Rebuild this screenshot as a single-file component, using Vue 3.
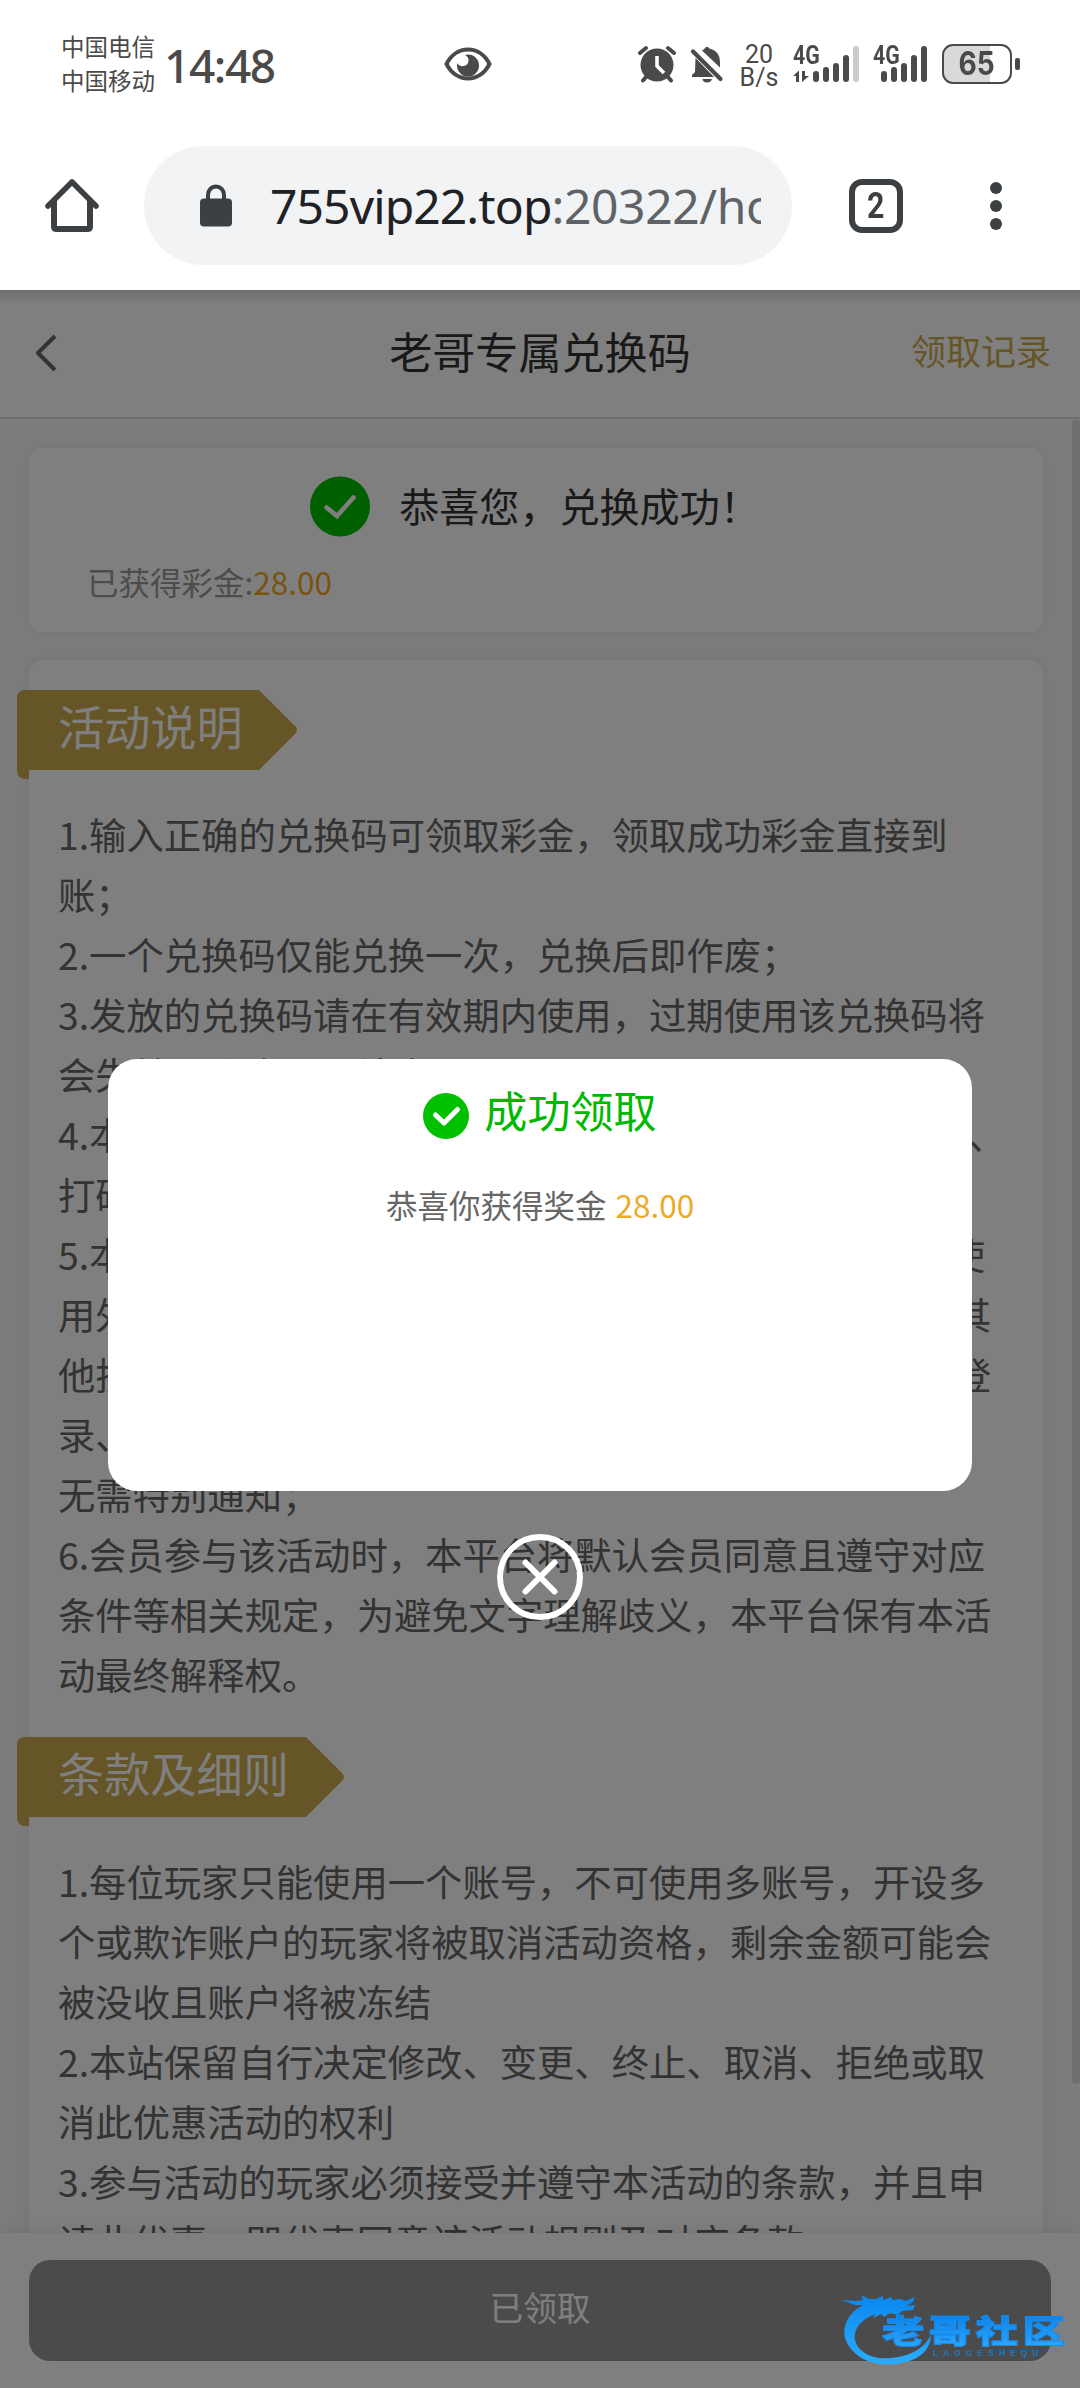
<script setup>
const intro = [
  '1.输入正确的兑换码可领取彩金，领取成功彩金直接到',
  '账；',
  '2.一个兑换码仅能兑换一次，兑换后即作废；',
  '3.发放的兑换码请在有效期内使用，过期使用该兑换码将',
  '会失效，彩金不予补发；',
  '4.本活动赠送的彩金需完成1倍有效流水后即可申请提款、',
  '打码要求不限游戏平台；',
  '5.本活动每位会员仅限参与一次，如发现会员恶意违规使',
  '用外挂程序、多账号、机器人、同一设备重复领取或者其',
  '他技术手段套取彩金，本平台有权冻结账号并且禁止其登',
  '录、取款及参与其他任何优惠活动的权利，平台',
  '无需特别通知；',
  '6.会员参与该活动时，本平台将默认会员同意且遵守对应',
  '条件等相关规定，为避免文字理解歧义，本平台保有本活',
  '动最终解释权。',
]
const terms = [
  '1.每位玩家只能使用一个账号，不可使用多账号，开设多',
  '个或欺诈账户的玩家将被取消活动资格，剩余金额可能会',
  '被没收且账户将被冻结',
  '2.本站保留自行决定修改、变更、终止、取消、拒绝或取',
  '消此优惠活动的权利',
  '3.参与活动的玩家必须接受并遵守本活动的条款，并且申',
  '请此优惠，即代表同意该活动规则及对应条款。',
]
const sections = [
  { title: '活动说明', lines: intro, tip: 242 },
  { title: '条款及细则', lines: terms, tip: 289 },
]
const barTops = [25, 21, 17, 9, 0]
</script>

<template>
  <div class="phone">
    <header class="status">
      <div class="carriers"><span>中国电信</span><span>中国移动</span></div>
      <div class="clock">14:48</div>
      <svg class="eye" width="48" height="34" viewBox="0 0 48 34">
        <path d="M2.5 17C7 8 15 2.5 24 2.5S41 8 45.500 17C41 26 33 31.500 24 31.500S7 26 2.500 17Z" fill="none" stroke="#4a4a4a" stroke-width="4" stroke-linejoin="round" />
        <path d="M24 7.500A11 11 0 1 1 13 18.500L13.300 16A6 6 0 0 0 24.500 14Q25 10 21 8Z" fill="#4a4a4a" />
      </svg>
      <div class="indicators">
        <svg class="alarm" width="38" height="38" viewBox="0 0 38 38">
          <circle cx="19" cy="20" r="16.500" fill="#4a4a4a" />
          <path d="M2 8 8 3M36 8 30 3" stroke="#4a4a4a" stroke-width="4" stroke-linecap="round" />
          <path d="M8 32 5 35.500M30 32 33 35.500" stroke="#4a4a4a" stroke-width="4" stroke-linecap="round" />
          <path d="M19 11V21L26 28" fill="none" stroke="#fff" stroke-width="3.600" />
        </svg>
        <svg class="bell" width="34" height="38" viewBox="0 0 34 38">
          <path d="M12 5.500Q14 4.500 15 3Q17 .5 19.500 3.500Q30 6 30 17V22.500Z" fill="#4a4a4a" />
          <path d="M5.500 13 24 32H2V30L5 27Z" fill="#4a4a4a" />
          <path d="M3 6.500 30.500 34" stroke="#4a4a4a" stroke-width="4.200" stroke-linecap="round" />
          <path d="M12.500 34H22Q21 37.500 17 37.500T12.500 34Z" fill="#4a4a4a" />
        </svg>
        <div class="speed"><span>20</span><span>B/s</span></div>
        <div class="signal first">
          <span class="net">4G</span>
          <svg width="66" height="37" viewBox="0 0 66 37">
            <path d="M0 30 6 24.500V36H3V30ZM9 25V36L16 30H12V25Z" fill="#4a4a4a" />
            <rect v-for="(t, i) in barTops" :key="i" :x="20 + i * 10" :y="t" width="6" :height="36 - t" rx="3" :fill="i === 4 ? '#cbcbcb' : '#4a4a4a'" />
          </svg>
        </div>
        <div class="signal">
          <span class="net">4G</span>
          <svg width="56" height="37" viewBox="0 0 56 37">
            <rect v-for="(t, i) in barTops" :key="i" :x="8 + i * 10" :y="t" width="6" :height="36 - t" rx="3" fill="#4a4a4a" />
          </svg>
        </div>
        <div class="battery"><span>65</span></div>
        <i class="nub"></i>
      </div>
    </header>

    <nav class="toolbar">
      <svg class="home" width="54" height="56" viewBox="0 0 54 56">
        <path d="M3 28 27 4 51 28" fill="none" stroke="#3c4043" stroke-width="5.600" stroke-linecap="round" stroke-linejoin="round" />
        <path d="M9 23V48.500Q9 51 11.500 51H42.500Q45 51 45 48.500V23" fill="none" stroke="#3c4043" stroke-width="6" />
      </svg>
      <div class="omnibox">
        <svg width="32" height="43" viewBox="0 0 32 43">
          <path d="M8 17V11A8 8.500 0 0 1 24 11V17" fill="none" stroke="#3c4043" stroke-width="4" />
          <rect y="14.500" width="32" height="28" rx="4" fill="#3c4043" />
        </svg>
        <div class="url"><b>755vip22.top</b><span>:20322/ho</span></div>
      </div>
      <div class="tabs"><span>2</span></div>
      <div class="dots"><i></i><i></i><i></i></div>
    </nav>

    <main class="page">
      <div class="titlebar">
        <svg width="22" height="38" viewBox="0 0 22 38"><path d="M20 2 3 19 20 36" fill="none" stroke="#666" stroke-width="4" stroke-linejoin="round" /></svg>
        <h1>老哥专属兑换码</h1>
        <a>领取记录</a>
      </div>

      <div class="scroll">
        <section class="card result">
          <div class="headline">
            <svg width="60" height="61" viewBox="0 0 60 61"><circle cx="30" cy="30.500" r="30" fill="#00c000" /><path d="M16.500 31.500 27 40 43.500 21.500" fill="none" stroke="#fff" stroke-width="4.600" stroke-linecap="round" /></svg>
            <span>恭喜您，兑换成功！</span>
          </div>
          <p>已获得彩金:<em>28.00</em></p>
        </section>

        <section class="card rules">
          <template v-for="s in sections" :key="s.title">
            <div class="tag">
              <svg :width="s.tip + 40" height="90" :viewBox="`0 0 ${s.tip + 40} 90`">
                <path :d="`M8 0H${s.tip}L${s.tip + 36} 36Q${s.tip + 40} 40 ${s.tip + 36} 44L${s.tip} 80H12V89H9Q0 89 0 80V8Q0 0 8 0Z`" fill="#ccaa4c" />
              </svg>
              <h2>{{ s.title }}</h2>
            </div>
            <div class="lines"><p v-for="l in s.lines" :key="l">{{ l }}</p></div>
          </template>
        </section>
        <i class="thumb"></i>
      </div>

      <footer class="bottom"><button>已领取</button></footer>

      <div class="overlay">
        <div class="dialog">
          <div class="success">
            <svg width="46" height="46" viewBox="0 0 46 46"><circle cx="23" cy="23" r="23" fill="#00c000" /><path d="M12.500 22 21 30 34.500 16.500" fill="none" stroke="#fff" stroke-width="5" stroke-linecap="round" stroke-linejoin="round" /></svg>
            <span>成功领取</span>
          </div>
          <p>恭喜你获得奖金 <em>28.00</em></p>
        </div>
        <svg class="close" width="88" height="88" viewBox="0 0 88 88">
          <circle cx="44" cy="44" r="40" fill="none" stroke="#fff" stroke-width="6" />
          <path d="M29.500 29.500 58.500 58.500M58.500 29.500 29.500 58.500" stroke="#fff" stroke-width="6" stroke-linecap="round" />
        </svg>
      </div>

      <div class="brand">
        <svg width="100" height="74" viewBox="0 0 100 74">
          <defs><linearGradient id="wave" x1="0" y1="0" x2="0" y2="1"><stop offset="0" stop-color="#0a86ee" /><stop offset="1" stop-color="#2badfd" /></linearGradient></defs>
          <path fill="url(#wave)" d="M0 7 13 8 21 7 19 2 27 6 34 6 41 3 41 7 50 4 50 7 58 6 64 8 73 4 71 9 64 13 73 12 71 17 60 18 56 22 48 20 42 24 39 21 31 25 33 21C18 27 11 37 13 47C16 60 32 67 49 65C70 63 84 54 89 41Q89 59 70 67C49 75 24 73 10 57C-4 42 2 22 21 12L13 12Z" />
        </svg>
        <div class="words"><strong>老哥社区</strong><small>LAOGESHEQU</small></div>
      </div>
    </main>
  </div>
</template>

<style>
body { margin: 0; background: #fff; }
</style>

<style scoped>
* { box-sizing: border-box; }
p, h1, h2 { margin: 0; font-weight: 400; }
em { font-style: normal; color: #f5a623; }
svg { display: block; flex: none; }
.phone { width: 1080px; height: 2388px; overflow: hidden; display: flex; flex-direction: column; background: #fff; font-family: "Noto Sans CJK SC", sans-serif; }

.status { height: 128px; display: flex; align-items: flex-start; color: #4a4a4a; }
.carriers { margin: 29px 0 0 61px; width: 103px; display: flex; flex-direction: column; font-size: 23.500px; line-height: 34px; white-space: nowrap; }
.clock { margin-top: 35px; width: 280px; font: 500 46px/60px "Noto Sans", sans-serif; letter-spacing: -1.400px; }
.eye { margin-top: 47px; }
.indicators { display: flex; margin-left: 146px; }
.alarm { margin-top: 45px; }
.bell { margin: 45px 0 0 14px; }
.speed { width: 40px; margin: 43px 0 0 15px; display: flex; flex-direction: column; align-items: center; font: 400 25px/23px Roboto, sans-serif; }
.signal { position: relative; margin: 46px 0 0 14px; }
.signal.first { margin-left: 14px; }
.net { position: absolute; left: 0; top: -3px; font: 700 26px/24px Roboto, sans-serif; transform: scaleX(.82); transform-origin: left; }
.battery { width: 70px; height: 40px; margin: 44px 0 0 13px; border: 2.500px solid #4a4a4a; border-radius: 11px; background: linear-gradient(90deg, #d9d9d9 70%, #fff 70%); display: flex; align-items: center; justify-content: center; font: 700 32px/36px Inter, sans-serif; }
.battery span { transform: scaleX(.88); }
.nub { width: 5px; height: 12px; margin: 58px 0 0 3px; border-radius: 2px; background: #4a4a4a; }

.toolbar { height: 162px; flex: none; display: flex; align-items: flex-start; }
.home { margin: 50px 0 0 45px; }
.omnibox { margin: 18px 0 0 45px; width: 648px; height: 119px; border-radius: 60px; background: #f1f3f4; display: flex; align-items: center; padding-left: 56px; }
.url { margin-left: 38px; width: 491px; overflow: hidden; white-space: nowrap; font: 400 48px/80px "Noto Sans", sans-serif; color: #5f6368; letter-spacing: -.4px; }
.url b { font-weight: 400; color: #202124; letter-spacing: -.9px; }
.tabs { margin: 51px 0 0 57px; width: 54px; height: 54px; border: 6px solid #3c4043; border-radius: 13px; display: flex; align-items: center; justify-content: center; font: 700 37px/42px Roboto, sans-serif; color: #3c4043; }
.tabs span { transform: scaleX(.82); }
.dots { margin: 54px 0 0 87px; display: flex; flex-direction: column; gap: 6px; }
.dots i { width: 12px; height: 12px; border-radius: 50%; background: #3c4043; }

.page { position: relative; flex: 1; min-height: 0; display: flex; flex-direction: column; background: #f8f8f8; }
.titlebar { height: 129px; flex: none; display: flex; align-items: center; padding: 0 29px 8px 35px; background: #fff; border-bottom: 2px solid #dcdcdc; }
.titlebar svg { margin-top: 6px; }
h1 { flex: 1; margin-left: 112px; text-align: center; font-size: 43.100px; line-height: 60px; color: #333; }
.titlebar a { font-size: 35px; line-height: 60px; color: #ccaa4c; }
.scroll { position: relative; flex: 1; min-height: 0; overflow: hidden; padding: 29px 37px 0 29px; }
.card { background: #fff; border-radius: 14px; box-shadow: 0 0 16px rgba(0, 0, 0, .08); }
.result { height: 184px; padding-top: 28px; }
.headline { display: flex; align-items: center; justify-content: center; gap: 29px; font-size: 40.100px; line-height: 61px; color: #333; }
.headline span { margin: -5px 2px 0 0; }
.result p { margin: 19px 0 0 58px; font-size: 31.500px; line-height: 50px; color: #999; }
.rules { margin-top: 28px; padding: 30px 0 60px; }
.tag { position: relative; height: 80px; margin-left: -12px; }
.tag h2 { position: absolute; left: 41px; top: 0; font-size: 46.200px; line-height: 70px; color: #fff; white-space: nowrap; }
.lines { margin: 34px 0 33px 29px; font-size: 37.350px; line-height: 60px; color: #666; white-space: nowrap; }
.thumb { position: absolute; right: 0; top: 1px; width: 8px; height: 1664px; border-radius: 4px; background: #dedede; }
.bottom { position: relative; flex: none; height: 155px; padding: 27px 29px; background: #fff; box-shadow: 0 0 20px rgba(0, 0, 0, .1); }
.bottom button { display: block; width: 100%; height: 101px; padding: 0 0 8px; border: 0; border-radius: 21px; background: #979797; color: #fff; font: 400 33.700px/60px "Noto Sans CJK SC", sans-serif; }

.overlay { position: absolute; inset: 0; padding-top: 769px; display: flex; flex-direction: column; align-items: center; background: linear-gradient(rgba(0, 0, 0, .13), transparent 14px), rgba(0, 0, 0, .5); }
.dialog { width: 864px; height: 432px; flex: none; padding-top: 34px; border-radius: 29px; background: #fff; text-align: center; }
.success { display: flex; justify-content: center; gap: 15px; font-size: 43.100px; line-height: 46px; color: #00b800; }
.success span { margin-top: -7px; margin-bottom: 7px; }
.dialog p { margin-top: 40px; font-size: 31.500px; line-height: 50px; color: #666; }
.dialog em { margin-left: 2px; color: #eea928; }
.close { margin-top: 42px; }

.brand { position: absolute; left: 842px; top: 2003px; display: flex; }
.words { margin: 17px 0 0 -60px; display: flex; flex-direction: column; }
.words strong { font-size: 32px; line-height: 38px; font-weight: 900; letter-spacing: 3.500px; white-space: nowrap; transform: scaleX(1.320); transform-origin: left; color: transparent; -webkit-text-stroke: 1px #168cf0; background: linear-gradient(#0a80e8 10%, #2aa4fb 90%); background-clip: text; -webkit-background-clip: text; }
.words small { margin: 0 0 0 51px; font: 700 8.500px/10px "Liberation Sans", sans-serif; letter-spacing: 5px; color: #1e78b8; }
</style>
